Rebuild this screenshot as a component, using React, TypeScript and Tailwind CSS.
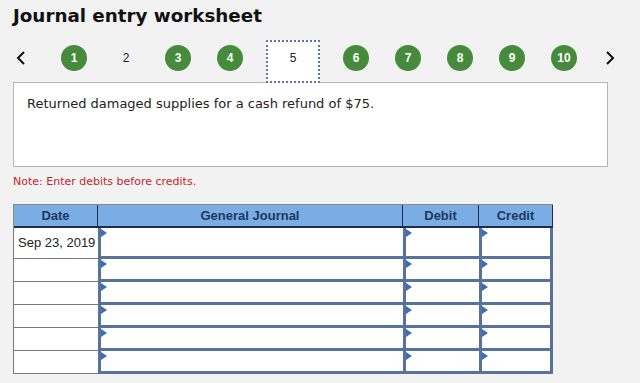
import React from "react";

const steps = [1, 2, 3, 4, 5, 6, 7, 8, 9, 10];
const done = [1, 3, 4, 6, 7, 8, 9, 10];

function Marker() {
  return (
    <svg className="absolute left-0 top-[1px]" width="6" height="8" viewBox="0 0 6 8">
      <polygon points="0,0 6,4 0,8" fill="#3d6db2" />
    </svg>
  );
}

function Chevron({ dir }: { dir: "left" | "right" }) {
  return (
    <svg width="10" height="16" viewBox="0 0 10 16">
      <polyline
        points={dir === "left" ? "8,2 2,8 8,14" : "2,2 8,8 2,14"}
        fill="none"
        stroke="#111"
        strokeWidth="2"
      />
    </svg>
  );
}

export default function App() {
  const rows = [
    { date: "Sep 23, 2019", h: "h-[31px]" },
    { date: "", h: "h-[23px]" },
    { date: "", h: "h-[23px]" },
    { date: "", h: "h-[23px]" },
    { date: "", h: "h-[23px]" },
    { date: "", h: "h-[23px]" },
  ];

  return (
    <div className="h-[383px] w-[640px] overflow-hidden bg-[#f2f2f2] font-['Liberation_Sans',Arial,sans-serif]">
      <h1 className="pl-[13px] pt-[5px] font-['DejaVu_Sans',Verdana,sans-serif] text-[18.3px] font-bold leading-[22px] text-[#111]">
        Journal entry worksheet
      </h1>

      <nav className="mt-[13px] flex h-[42px] items-start">
        <div className="flex w-[48px] justify-start pl-[16px] pt-[10px]">
          <Chevron dir="left" />
        </div>
        {steps.map((n) =>
          n === 5 ? (
            <div key={n} className="mx-[10px] flex h-[43px] w-[54px] justify-center border-2 border-dotted border-[#5b76a0] bg-white pt-[8px] text-[12px] leading-[16px] text-[#222]">
              {n}
            </div>
          ) : (
            <div key={n} className="flex w-[52px] justify-center pt-[5px]">
              {done.includes(n) ? (
                <span className="flex h-[26px] w-[26px] items-center justify-center rounded-full bg-[#468a3b] text-[12px] font-bold text-white">
                  {n}
                </span>
              ) : (
                <span className="flex h-[26px] items-center text-[12px] text-[#222]">{n}</span>
              )}
            </div>
          )
        )}
        <div className="flex w-[40px] justify-center pt-[10px]">
          <Chevron dir="right" />
        </div>
      </nav>

      <div className="ml-[13px] h-[85px] w-[595px] border border-[#b4b4b4] bg-white pl-[13px] pt-[13px] font-['DejaVu_Sans',Verdana,sans-serif] text-[13px] leading-[16px] text-[#222]">
        Returned damaged supplies for a cash refund of $75.
      </div>

      <p className="ml-[13px] mt-[8px] font-['DejaVu_Sans',Verdana,sans-serif] text-[11px] leading-[14px] text-[#c1272d]">
        Note: Enter debits before credits.
      </p>

      <div className="ml-[13px] mt-[15px] w-[540px]">
        <div className="flex h-[24px] border-l border-t border-[#8a8a8a] bg-[#79ade4] text-[13px] font-bold text-[#1f3860]">
          <div className="flex w-[84px] items-center justify-center border-b-2 border-r border-[#1c2d4d]">Date</div>
          <div className="flex w-[305px] items-center justify-center border-b-2 border-r border-[#1c2d4d]">General Journal</div>
          <div className="flex w-[76px] items-center justify-center border-b-2 border-r border-[#1c2d4d]">Debit</div>
          <div className="flex w-[74px] items-center justify-center border-b-2 border-r border-[#1c2d4d]">Credit</div>
        </div>
        {rows.map((r, i) => (
          <div key={i} className={`flex ${r.h}`}>
            <div className="flex w-[85px] items-center border-b border-l border-[#7a7a7a] bg-white pl-[4px] text-[13px] text-[#222]">
              {r.date}
            </div>
            <div className="relative w-[305px] border-b-[3px] border-l-[3px] border-[#58739b] bg-white">
              <Marker />
            </div>
            <div className="relative w-[76px] border-b-[3px] border-l-[3px] border-[#58739b] bg-white">
              <Marker />
            </div>
            <div className="relative w-[74px] border-b-[3px] border-l-[3px] border-r-[3px] border-[#58739b] bg-white">
              <Marker />
            </div>
          </div>
        ))}
      </div>
    </div>
  );
}
